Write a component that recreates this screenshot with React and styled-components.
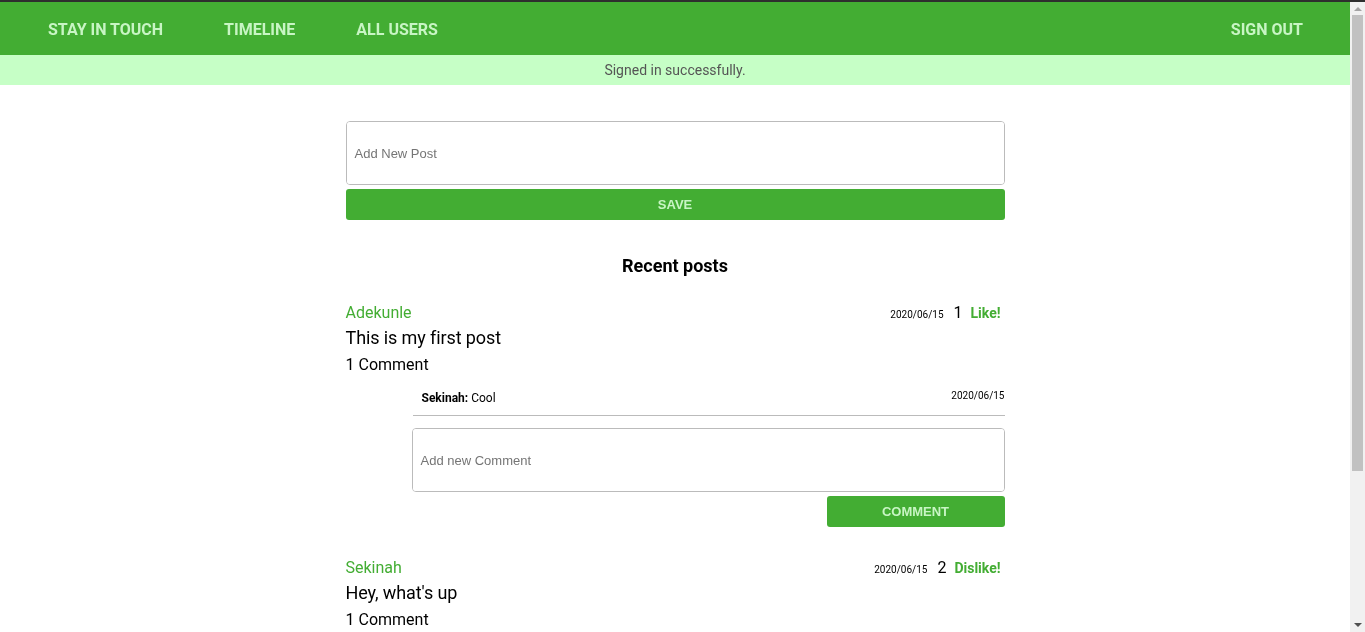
import React from 'react'
import styled, { createGlobalStyle } from 'styled-components'

const green = '#43ad33'
const lightGreen = '#c8f5c4'
const scrollbarWidth = 15

const GlobalStyle = createGlobalStyle`
    body {
        margin: 0;
        font-family: Roboto, "Liberation Sans", sans-serif;
        color: #000;
        background: #fff;
        border-top: 2px solid #2e2e2e;
    }
    * { box-sizing: border-box; }
`

const Page = styled.div`
    margin-right: ${scrollbarWidth}px;
`

const Scrollbar = styled.div`
    position: fixed;
    top: 2px;
    right: 0;
    bottom: 0;
    width: ${scrollbarWidth}px;
    background: #f1f1f1;
    display: flex;
    flex-direction: column;
    align-items: center;
`

const Arrow = styled.div`
    width: 0;
    height: 0;
    border-left: 4px solid transparent;
    border-right: 4px solid transparent;
    ${props => props.down
        ? 'border-top: 4px solid #505050; margin-top: auto; margin-bottom: 5px;'
        : 'border-bottom: 4px solid #a3a3a3; margin-top: 5px;'}
`

const Thumb = styled.div`
    width: 11px;
    height: 456px;
    margin-top: 4px;
    background: #c1c1c1;
`

const Nav = styled.nav`
    display: flex;
    align-items: center;
    height: 53px;
    padding: 1px 47px 0 48px;
    background: ${green};
`

const NavLink = styled.a`
    font-family: Roboto, sans-serif;
    font-weight: 700;
    font-size: 16px;
    color: ${lightGreen};
    text-decoration: none;
    margin-right: ${props => props.right ? '0' : '61px'};
    margin-left: ${props => props.right ? 'auto' : '0'};
`

const Flash = styled.div`
    height: 30px;
    display: flex;
    align-items: center;
    justify-content: center;
    background: #c6ffc6;
    color: #555;
    font-size: 14px;
`

const Main = styled.main`
    width: 659px;
    margin: 36px auto 0;
    padding-bottom: 200px;
`

const TextArea = styled.textarea`
    display: block;
    width: 100%;
    height: 64px;
    border: 1px solid #bbb;
    border-radius: 4px;
    padding: 24px 8px;
    font-family: "Liberation Sans", Arial, sans-serif;
    font-size: 13px;
    resize: none;
    outline: none;
    &::placeholder { color: #757575; }
`

const Button = styled.button`
    display: block;
    width: ${props => props.width || '100%'};
    margin-left: auto;
    height: 31px;
    margin-top: 4px;
    border: none;
    border-radius: 3px;
    background: ${green};
    color: ${lightGreen};
    font-family: "Liberation Sans", Arial, sans-serif;
    font-weight: 700;
    font-size: 13px;
`

const Heading = styled.h2`
    margin: 35px 0 25px;
    text-align: center;
    font-size: 18px;
    font-weight: 700;
    line-height: 22px;
`

const Post = styled.article`
    margin-bottom: 30px;
`

const PostHead = styled.div`
    display: flex;
    align-items: center;
    justify-content: space-between;
    height: 20px;
`

const Author = styled.span`
    color: ${green};
    font-size: 16px;
`

const Meta = styled.div`
    display: flex;
    align-items: baseline;
    padding-right: 4px;
`

const SmallDate = styled.span`
    font-size: 10px;
    margin-right: ${props => props.gap || '0'};
    padding-top: ${props => props.drop || '0'};
`

const Count = styled.span`
    font-size: 16px;
    margin-right: 8px;
`

const LikeLink = styled.a`
    color: ${green};
    font-weight: 700;
    font-size: 14px;
`

const Body = styled.p`
    margin: 4px 0 0;
    font-size: 18px;
    line-height: 24px;
    letter-spacing: -0.1px;
`

const CommentCount = styled.p`
    margin: 4px 0 0;
    font-size: 16px;
    line-height: 22px;
`

const Comments = styled.div`
    margin-left: 66px;
    margin-top: 6px;
`

const CommentRow = styled.div`
    display: flex;
    justify-content: space-between;
    align-items: flex-start;
    padding: 6px 0 7px 9px;
    margin: 0 0 12px 1px;
    border-bottom: 1px solid #bbb;
`

const CommentText = styled.span`
    font-size: 12px;
    line-height: 20px;
    b { font-weight: 700; }
`

const posts = [
    { author: 'Adekunle', body: 'This is my first post', likes: 1, action: 'Like!', date: '2020/06/15',
      comments: [{ author: 'Sekinah', text: 'Cool', date: '2020/06/15' }] },
    { author: 'Sekinah', body: "Hey, what's up", likes: 2, action: 'Dislike!', date: '2020/06/15',
      comments: [{ author: 'Adekunle', text: 'Nothing much', date: '2020/06/15' }] },
]

export default function App() {
    return <>
        <GlobalStyle />
        <Page>
            <Nav>
                <NavLink href="#">STAY IN TOUCH</NavLink>
                <NavLink href="#">TIMELINE</NavLink>
                <NavLink href="#">ALL USERS</NavLink>
                <NavLink href="#" right>SIGN OUT</NavLink>
            </Nav>
            <Flash>Signed in successfully.</Flash>
            <Main>
                <TextArea placeholder="Add New Post" />
                <Button>SAVE</Button>
                <Heading>Recent posts</Heading>
                {posts.map((post, idx) => (
                    <Post key={idx}>
                        <PostHead>
                            <Author>{post.author}</Author>
                            <Meta>
                                <SmallDate gap="10px">{post.date}</SmallDate>
                                <Count>{post.likes}</Count>
                                <LikeLink>{post.action}</LikeLink>
                            </Meta>
                        </PostHead>
                        <Body>{post.body}</Body>
                        <CommentCount>{post.comments.length} Comment</CommentCount>
                        <Comments>
                            {post.comments.map((c, i) => (
                                <CommentRow key={i}>
                                    <CommentText><b>{c.author}:</b> {c.text}</CommentText>
                                    <SmallDate drop="2px">{c.date}</SmallDate>
                                </CommentRow>
                            ))}
                            <TextArea placeholder="Add new Comment" />
                            <Button width="178px">COMMENT</Button>
                        </Comments>
                    </Post>
                ))}
            </Main>
        </Page>
        <Scrollbar>
            <Arrow />
            <Thumb />
            <Arrow down />
        </Scrollbar>
    </>
}
